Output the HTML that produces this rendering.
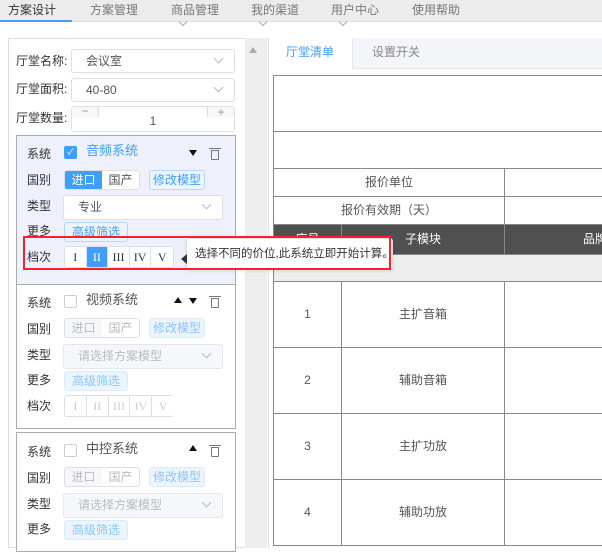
<!DOCTYPE html><html><head><meta charset="utf-8"><style>
*{box-sizing:border-box;margin:0;padding:0}
body{width:602px;height:542px;overflow:hidden;background:#fff;font-family:"Liberation Sans","Noto Sans CJK SC",sans-serif;font-size:12px;line-height:1.2;color:#333;position:relative}
.a{position:absolute}
.nav{left:0;top:0;width:602px;height:22px;background:#ececec;border-bottom:1px solid #dcdcdc}
.nav span{position:absolute;top:3px;font-size:12px;color:#777}
.chev{width:6px;height:6px;border-right:1px solid #aaa;border-bottom:1px solid #aaa;transform:rotate(45deg)}
.sel{border:1px solid #dcdfe6;border-radius:3px;background:#fff;height:24px}
.sel .t{position:absolute;left:14px;top:4px;color:#555}
.sel .c{position:absolute;right:12px;top:5px;width:7px;height:7px;border-right:1px solid #bbb;border-bottom:1px solid #bbb;transform:rotate(45deg)}
.dis{background:#f5f7fa;border-color:#e4e7ed}
.dis .t{color:#bbb}
.lbl{color:#333;font-size:12px}
.card{border:1px solid #aaa}
.btg{height:20px;border:1px solid #dcdfe6;border-radius:3px;display:flex;overflow:hidden;background:#fff}
.btg div{width:37px;text-align:center;line-height:18px;font-size:12px}
.tag{height:20px;border:1px solid #b3d8ff;background:#ecf5ff;color:#409eff;border-radius:3px;line-height:18px;text-align:center;font-size:12px}
.tagd{border-color:#d9ecff;color:#8cc5ff}
.lv{height:22px;border:1px solid #dcdfe6;border-radius:3px;display:flex;background:#fff}
.lv div{width:22px;text-align:center;line-height:20px;border-right:1px solid #dcdfe6;font-family:"Liberation Serif",serif;font-size:12px}
.cb{width:13px;height:13px;border:1px solid #ccc;border-radius:2px;background:#fff}
.tri-d{width:0;height:0;border-left:4px solid transparent;border-right:4px solid transparent;border-top:6px solid #111}
.tri-u{width:0;height:0;border-left:4px solid transparent;border-right:4px solid transparent;border-bottom:6px solid #111}
.trash{width:8px;height:10px;border:1px solid #777;border-radius:0 0 1px 1px}
.trash:before{content:"";position:absolute;left:-3px;top:-3px;width:12px;height:1px;background:#777}
table{border-collapse:collapse;position:absolute;left:273px;top:75px;width:340px}
td{border:1px solid #888;text-align:center;color:#555;font-size:12px}
</style></head><body>
<div class="a nav">
<span style="left:8px;color:#333">方案设计</span><span style="left:90px">方案管理</span><span style="left:171px">商品管理</span><span style="left:251px">我的渠道</span><span style="left:331px">用户中心</span><span style="left:412px">使用帮助</span>
<div class="a" style="left:0;top:20px;width:72px;height:2px;background:#409eff"></div>
</div>
<div class="a chev" style="left:180px;top:19px"></div><div class="a chev" style="left:260px;top:19px"></div><div class="a chev" style="left:340px;top:19px"></div>

<div class="a" style="left:8px;top:38px;width:238px;height:510px;border:1px solid #ddd;border-right:none"></div>
<div class="a" style="left:245px;top:38px;width:22px;height:510px;background:#eee"></div>
<div class="a tri-u" style="left:249px;top:47px;border-bottom-color:#aaa"></div>
<div class="a" style="left:268px;top:38px;width:1px;height:510px;background:#ddd"></div>

<div class="a lbl" style="left:16px;top:54px">厅堂名称:</div>
<div class="a sel" style="left:71px;top:49px;width:164px"><span class="t">会议室</span><span class="c"></span></div>
<div class="a lbl" style="left:16px;top:82px">厅堂面积:</div>
<div class="a sel" style="left:71px;top:78px;width:164px"><span class="t">40-80</span><span class="c"></span></div>
<div class="a lbl" style="left:16px;top:111px">厅堂数量:</div>
<div class="a sel" style="left:71px;top:106px;width:164px;height:26px">
<div class="a" style="left:0;top:0;width:27px;height:10px;background:#f5f7fa;border-right:1px solid #dcdfe6;color:#999;text-align:center;line-height:8px">−</div>
<div class="a" style="right:0;top:0;width:27px;height:10px;background:#f5f7fa;border-left:1px solid #dcdfe6;color:#999;text-align:center;line-height:10px">+</div>
<div class="a" style="left:0;width:162px;top:7px;text-align:center;color:#555">1</div></div>

<div class="a card" style="left:16px;top:135px;width:220px;height:150px;background:#eef0fb"></div>
<div class="a lbl" style="left:27px;top:147px">系统</div>
<div class="a cb" style="left:64px;top:146px;background:#409eff;border-color:#409eff;color:#fff;font-size:9px;line-height:11px;text-align:center">✓</div>
<div class="a" style="left:86px;top:143px;color:#409eff;font-size:13px">音频系统</div>
<div class="a tri-d" style="left:189px;top:150px"></div>
<div class="a trash" style="left:211px;top:150px"></div>
<div class="a lbl" style="left:27px;top:173px">国别</div>
<div class="a btg" style="left:64px;top:170px;width:76px"><div style="background:#409eff;color:#fff">进口</div><div style="color:#555">国产</div></div>
<div class="a tag" style="left:149px;top:170px;width:56px">修改模型</div>
<div class="a lbl" style="left:27px;top:199px">类型</div>
<div class="a sel" style="left:63px;top:195px;width:160px;height:25px"><span class="t">专业</span><span class="c"></span></div>
<div class="a lbl" style="left:27px;top:224px">更多</div>
<div class="a tag" style="left:64px;top:222px;width:64px">高级筛选</div>
<div class="a lbl" style="left:27px;top:250px">档次</div>
<div class="a lv" style="left:64px;top:246px;width:110px"><div>I</div><div style="background:#409eff;color:#fff">II</div><div>III</div><div>IV</div><div style="border:none">V</div></div>

<div class="a card" style="left:16px;top:284px;width:220px;height:145px;background:#fff"></div>
<div class="a lbl" style="left:27px;top:296px">系统</div>
<div class="a cb" style="left:64px;top:295px"></div>
<div class="a" style="left:86px;top:292px;color:#555;font-size:13px">视频系统</div>
<div class="a tri-u" style="left:174px;top:297px"></div><div class="a tri-d" style="left:189px;top:298px"></div>
<div class="a trash" style="left:211px;top:298px"></div>
<div class="a lbl" style="left:27px;top:322px">国别</div>
<div class="a btg" style="left:64px;top:318px;width:76px;background:#f5f7fa"><div style="color:#bbb">进口</div><div style="color:#bbb;background:#fff">国产</div></div>
<div class="a tag tagd" style="left:149px;top:318px;width:56px">修改模型</div>
<div class="a lbl" style="left:27px;top:348px">类型</div>
<div class="a sel dis" style="left:63px;top:344px;width:160px;height:25px"><span class="t">请选择方案模型</span><span class="c"></span></div>
<div class="a lbl" style="left:27px;top:373px">更多</div>
<div class="a tag tagd" style="left:64px;top:371px;width:64px">高级筛选</div>
<div class="a lbl" style="left:27px;top:399px">档次</div>
<div class="a lv" style="left:64px;top:395px;width:110px;border-right:none;color:#ccc"><div>I</div><div>II</div><div>III</div><div>IV</div><div style="border:none">V</div></div>

<div class="a card" style="left:16px;top:432px;width:220px;height:120px;background:#fff"></div>
<div class="a lbl" style="left:27px;top:445px">系统</div>
<div class="a cb" style="left:64px;top:444px"></div>
<div class="a" style="left:86px;top:441px;color:#555;font-size:13px">中控系统</div>
<div class="a tri-u" style="left:189px;top:445px"></div>
<div class="a trash" style="left:211px;top:447px"></div>
<div class="a lbl" style="left:27px;top:471px">国别</div>
<div class="a btg" style="left:64px;top:467px;width:76px;background:#f5f7fa"><div style="color:#bbb">进口</div><div style="color:#bbb;background:#fff">国产</div></div>
<div class="a tag tagd" style="left:149px;top:467px;width:56px">修改模型</div>
<div class="a lbl" style="left:27px;top:497px">类型</div>
<div class="a sel dis" style="left:63px;top:493px;width:160px;height:25px"><span class="t">请选择方案模型</span><span class="c"></span></div>
<div class="a lbl" style="left:27px;top:522px">更多</div>
<div class="a tag tagd" style="left:64px;top:520px;width:64px">高级筛选</div>

<div class="a" style="left:352px;top:38px;width:250px;height:31px;background:#f4f5f8;border-bottom:1px solid #e4e7ed;border-left:1px solid #e4e7ed"></div>
<div class="a" style="left:286px;top:45px;color:#409eff;font-size:12px">厅堂清单</div>
<div class="a" style="left:372px;top:45px;color:#888;font-size:12px">设置开关</div>

<table>
<tr style="height:56px"><td colspan="3" style="border-top:1px solid #888"></td></tr>
<tr style="height:37px"><td colspan="3"></td></tr>
<tr style="height:28px"><td colspan="2">报价单位</td><td></td></tr>
<tr style="height:28px"><td colspan="2">报价有效期（天）</td><td></td></tr>
<tr style="height:30px;background:#505050"><td style="width:68px;color:#fff">序号</td><td style="width:163px;color:#fff">子模块</td><td style="color:#fff;text-align:left;padding-left:78px">品牌</td></tr>
<tr style="height:27px;background:#eee"><td colspan="3"></td></tr>
<tr style="height:66px"><td>1</td><td>主扩音箱</td><td></td></tr>
<tr style="height:66px"><td>2</td><td>辅助音箱</td><td></td></tr>
<tr style="height:66px"><td>3</td><td>主扩功放</td><td></td></tr>
<tr style="height:66px"><td>4</td><td>辅助功放</td><td></td></tr>
</table>

<div class="a" style="left:186px;top:238px;width:207px;height:32px;background:#fff;border:1px solid #ddd;border-radius:3px;box-shadow:0 1px 4px rgba(0,0,0,.1)"></div>
<div class="a" style="left:181px;top:254px;width:0;height:0;border-top:5px solid transparent;border-bottom:5px solid transparent;border-right:6px solid #333"></div>
<div class="a" style="left:195px;top:248px;font-size:11.5px;color:#333;white-space:nowrap">选择不同的价位,此系统立即开始计算。</div>
<div class="a" style="left:23px;top:236px;width:368px;height:34px;border:2px solid #f5222d"></div>
</body></html>
